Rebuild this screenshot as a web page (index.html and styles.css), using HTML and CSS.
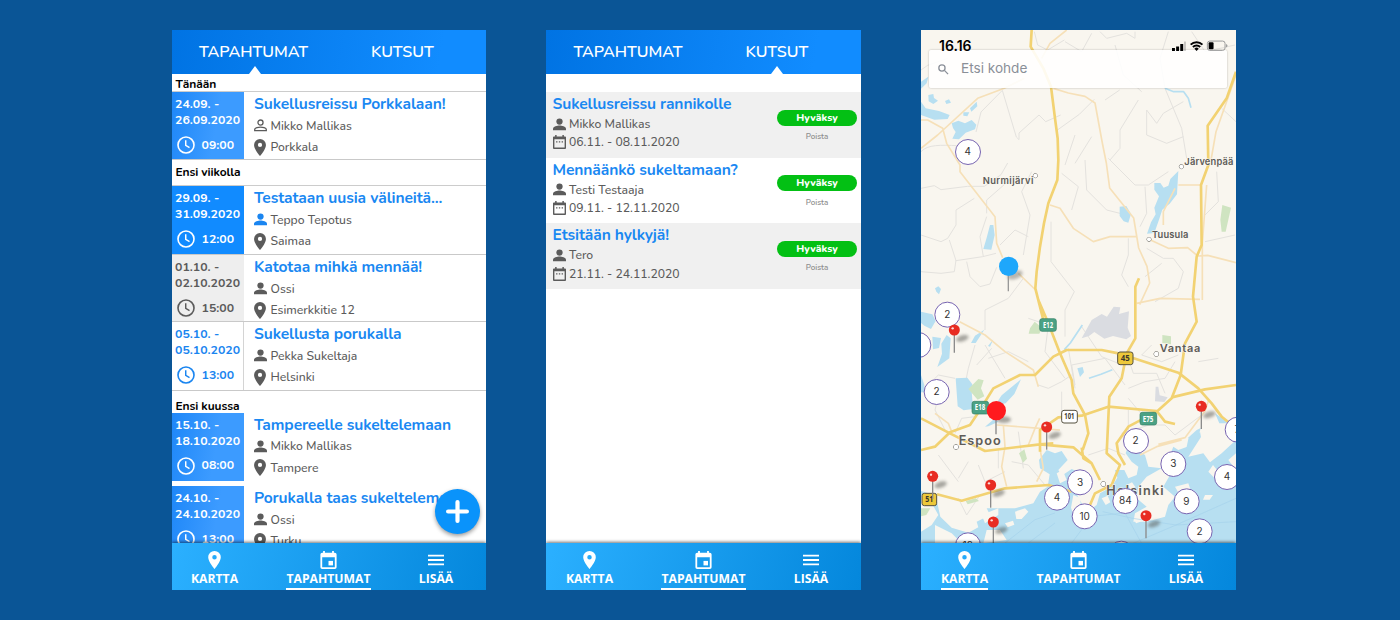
FILE: index.html
```html
<!DOCTYPE html>
<html lang="fi">
<head>
<meta charset="utf-8">
<title>Tapahtumat</title>
<link rel="stylesheet" href="styles.css">
</head>
<body>
<svg class="defs" width="0" height="0">
  <defs>
    <symbol id="i-person" viewBox="0 0 24 24"><circle cx="12" cy="6.500" r="5.800"/><path d="M0 22.500v-2.700C0 15.800 8 14 12 14s12 1.800 12 5.800v2.700z"/></symbol>
    <symbol id="i-person-o" viewBox="0 0 24 24"><circle cx="12" cy="6.500" r="4.700" fill="none" stroke="currentColor" stroke-width="2.400"/><path d="M1.300 21.500v-2c0-3 7.200-4.600 10.700-4.600s10.700 1.600 10.700 4.600v2z" fill="none" stroke="currentColor" stroke-width="2.400"/></symbol>
    <symbol id="i-pin" viewBox="0 0 14 20"><path fill-rule="evenodd" d="M7 0a7 7 0 0 0-7 7c0 5.250 7 13 7 13s7-7.750 7-13a7 7 0 0 0-7-7zm0 9.500a2.500 2.500 0 1 1 0-5 2.500 2.500 0 0 1 0 5z"/></symbol>
    <symbol id="i-clock" viewBox="0 0 20 20"><circle cx="10" cy="10" r="8.900" fill="none" stroke="currentColor" stroke-width="1.800"/><path d="M9.700 4.800v5.600l4.200 2.500" fill="none" stroke="currentColor" stroke-width="1.600"/></symbol>
    <symbol id="i-cal" viewBox="0 0 14 15"><path fill-rule="evenodd" d="M2.300 0h1.600v1.500h6.200V0h1.600v1.500H13a1 1 0 0 1 1 1V14a1 1 0 0 1-1 1H1a1 1 0 0 1-1-1V2.500a1 1 0 0 1 1-1h1.300zM1.500 4.500v9h11v-9z"/><path d="M3.300 6.700h1.500v1.400H3.300zm3 0h1.500v1.400H6.300zm3 0h1.500v1.400H9.300z"/></symbol>
    <symbol id="i-event" viewBox="0 0 18 20"><path fill-rule="evenodd" d="M3 0h2v2h8V0h2v2h1a2 2 0 0 1 2 2v14a2 2 0 0 1-2 2H2a2 2 0 0 1-2-2V4a2 2 0 0 1 2-2h1zM2 7v11h14V7z"/><path d="M9 11h5v5H9z"/></symbol>
    <symbol id="i-menu" viewBox="0 0 18 12"><path d="M0 0h18v2H0zm0 5h18v2H0zm0 5h18v2H0z"/></symbol>
    <symbol id="redpin" viewBox="-10 -10 60 90" overflow="visible"><ellipse cx="24" cy="25" rx="19" ry="9" transform="rotate(-18 24 25)" fill="#55544f" opacity=".5" filter="url(#soft)"/><path d="M0 10v58" stroke="#8b8b8b" stroke-width="4"/><circle r="16.500" fill="#e82c22"/><circle cx="-5" cy="-5" r="3.500" fill="#fff" opacity=".85"/></symbol>
    <filter id="soft" x="-50%" y="-100%" width="200%" height="300%"><feGaussianBlur stdDeviation="5"/></filter>
  </defs>
</svg>
<main class="stage">

<section class="phone events">
  <header class="tabs"><span class="tab tab-a active">TAPAHTUMAT</span><span class="tab tab-b">KUTSUT</span></header>
  <div class="list">
    <h2 class="group g1">Tänään</h2>
    <article class="row light lined">
      <div class="date"><p>24.09. -</p><p>26.09.2020</p><div class="time"><svg><use href="#i-clock"/></svg><span>09:00</span></div></div>
      <div class="info"><h3>Sukellusreissu Porkkalaan!</h3><p><svg class="person"><use href="#i-person-o"/></svg>Mikko Mallikas</p><p><svg class="pin"><use href="#i-pin"/></svg>Porkkala</p></div>
    </article>
    <h2 class="group g2">Ensi viikolla</h2>
    <article class="row solid lined tall">
      <div class="date"><p>29.09. -</p><p>31.09.2020</p><div class="time"><svg><use href="#i-clock"/></svg><span>12:00</span></div></div>
      <div class="info"><h3>Testataan uusia välineitä...</h3><p><svg class="person blue"><use href="#i-person"/></svg>Teppo Tepotus</p><p><svg class="pin"><use href="#i-pin"/></svg>Saimaa</p></div>
    </article>
    <article class="row grey lined short">
      <div class="date"><p>01.10. -</p><p>02.10.2020</p><div class="time"><svg><use href="#i-clock"/></svg><span>15:00</span></div></div>
      <div class="info"><h3>Katotaa mihkä mennää!</h3><p><svg class="person"><use href="#i-person"/></svg>Ossi</p><p><svg class="pin"><use href="#i-pin"/></svg>Esimerkkitie 12</p></div>
    </article>
    <article class="row plain lined">
      <div class="date"><p>05.10. -</p><p>05.10.2020</p><div class="time"><svg><use href="#i-clock"/></svg><span>13:00</span></div></div>
      <div class="info"><h3>Sukellusta porukalla</h3><p><svg class="person"><use href="#i-person"/></svg>Pekka Sukeltaja</p><p><svg class="pin"><use href="#i-pin"/></svg>Helsinki</p></div>
    </article>
    <h2 class="group g3">Ensi kuussa</h2>
    <article class="row light">
      <div class="date"><p>15.10. -</p><p>18.10.2020</p><div class="time"><svg><use href="#i-clock"/></svg><span>08:00</span></div></div>
      <div class="info"><h3>Tampereelle sukeltelemaan</h3><p><svg class="person"><use href="#i-person"/></svg>Mikko Mallikas</p><p><svg class="pin"><use href="#i-pin"/></svg>Tampere</p></div>
    </article>
    <article class="row light spaced">
      <div class="date"><p>24.10. -</p><p>24.10.2020</p><div class="time"><svg><use href="#i-clock"/></svg><span>13:00</span></div></div>
      <div class="info"><h3>Porukalla taas sukeltelemaan</h3><p><svg class="person"><use href="#i-person"/></svg>Ossi</p><p><svg class="pin"><use href="#i-pin"/></svg>Turku</p></div>
    </article>
  </div>
  <button class="fab" aria-label="Lisää"><svg viewBox="0 0 22 22"><path d="M11 2v18M2 11h18" stroke="#fff" stroke-width="4" stroke-linecap="round"/></svg></button>
  <nav class="nav"><a><svg class="n-pin"><use href="#i-pin"/></svg><span>KARTTA</span></a><a class="on"><svg class="n-ev"><use href="#i-event"/></svg><span>TAPAHTUMAT</span></a><a><svg class="n-menu"><use href="#i-menu"/></svg><span>LISÄÄ</span></a></nav>
</section>

<section class="phone invites">
  <header class="tabs"><span class="tab tab-a">TAPAHTUMAT</span><span class="tab tab-b active">KUTSUT</span></header>
  <div class="list inv-list">
    <article class="invite"><div class="inv-info"><h3>Sukellusreissu rannikolle</h3><p><svg class="person"><use href="#i-person"/></svg>Mikko Mallikas</p><p><svg class="cal"><use href="#i-cal"/></svg>06.11. - 08.11.2020</p></div><div class="actions"><button>Hyväksy</button><span>Poista</span></div></article>
    <article class="invite"><div class="inv-info"><h3>Mennäänkö sukeltamaan?</h3><p><svg class="person"><use href="#i-person"/></svg>Testi Testaaja</p><p><svg class="cal"><use href="#i-cal"/></svg>09.11. - 12.11.2020</p></div><div class="actions"><button>Hyväksy</button><span>Poista</span></div></article>
    <article class="invite"><div class="inv-info"><h3>Etsitään hylkyjä!</h3><p><svg class="person"><use href="#i-person"/></svg>Tero</p><p><svg class="cal"><use href="#i-cal"/></svg>21.11. - 24.11.2020</p></div><div class="actions"><button>Hyväksy</button><span>Poista</span></div></article>
  </div>
  <nav class="nav"><a><svg class="n-pin"><use href="#i-pin"/></svg><span>KARTTA</span></a><a class="on"><svg class="n-ev"><use href="#i-event"/></svg><span>TAPAHTUMAT</span></a><a><svg class="n-menu"><use href="#i-menu"/></svg><span>LISÄÄ</span></a></nav>
</section>

<section class="phone mapview">
  <svg class="map" viewBox="18 15 945 1539" preserveAspectRatio="none">
    <rect x="18" y="15" width="945" height="1680" fill="#f9f6ef"/>
    <g class="water">
      <path d="M18 170l22-15-5 20-17 16zM40 210l15-3 2 12 12 8-14 10-14-8zM90 228l12-5 6 10-14 4zM18 230l14 20 40 8 32 12-6 12-40 2-40-14zM110 295l20-8 20 8 20-10 14 14-4 14-28 10-20 20-20-2 10-20-8-12zM145 262l18 0-6 12-12-2zM165 250l20-20 2 14-18 16z"/>
    </g>
    <g class="minor">
      <path d="M18 135l20-14 60-21M18 380c20-22 60-20 110-18M262 196l-64 65-15 60M262 196l42 140 8 8 0-20 60-54 20 20 45-20M423 318l70-50 45-45M358 20l10 40 30 15 50-30M450 50l50 30 30-55M555 20l20 20 60-15 25 15 0-20M600 60l25 90 55 50M760 20l-25 80 15 90M830 20l40 60 90-20M614 195l-44 30M670 225l-55 90 0 55-30 35M695 255l30 40 20-30 60-35M695 255l0 75 60 25 50-20M750 190l50 120 15 90M920 250l43 40M480 330l-30 90M530 335l-50 80"/>
      <path d="M18 490l40-8 20 12 80-10 50 0 50-35 20-35M18 630l60 20 20-10 25-40v-45l55-35M103 645l20 62 80-12 40-10M18 740l60 5 40-5 5-35M215 565v-40l80-70M350 440l-30 60 25 70-20 120M155 710l10 45 30 30 30-8 20-50M205 695l-10-60 20-60M255 660l45-45 40 20M325 760l-45 60-70 35v60M408 590l0 120 70 90-28 55v80M440 445l50 40-20 70M510 405l5 90 60 60 40 10M580 400l80 80 40 0 60-40M690 485l5 80-20 40M640 640l0 50-20 60 20 35M695 670l50 30 30 0 30 40-15 50-70 40M740 715l-50 40M905 440l5 90-40 40M870 650l90-20"/>
      <path d="M340 880l60 20-10 80 60 80M500 905l60 90 50 20M180 960l-20 70-6 30M210 960l60 100M220 1000l60-20 60 30M230 970l-45 50M480 1080l-10-60 100-20 60 80M460 970l20 120M640 1000l15 45 70 0 25 60M640 1090l50-20 60-10 30-50M710 960l-30 30 60 20 50-20M640 1120l50 60M370 1080l30 10 40-20 30-20M20 1100l50-50 50 10M90 1215l-30-60 20-80M120 1225l20-45 40-5M850 1010l60-10M690 1200l60 0 30 30 80-60M640 1155v70M720 1195l-100 30M440 1100v80M190 1320l20 50 60-30M70 1290l60 80M160 1310l-30 50M290 1310l50 10 50 60M250 1270v60M130 1420l25 50 40-60M310 1220l15 110M520 1290l60-20 50 20"/>
    </g>
    <g class="water">
      <path d="M790 438l-4 70-22 28-22 18-10 30-14 40-22 2 12-34 14-24-4-20 14-34 -14-20 0-20 18 0 10 14 14-6 6-20zM614 545l20-2 14 24-8 26-14-4-12-16zM225 600l10 0 4 30-10 44-24-2 10-34zM60 790l10-6 8 8-6 16-8-8z"/>
      <path d="M18 860l34 8 10 20-14 24-20-10-10-8zM95 930l12 10-4 60-36 26 14-40-2-30zM208 914l-26 40-14 0 12-22zM52 935l26 4-6 30-18 4zM235 943l-16 20 6 2zM122 1060l35-2 15 20-2 20 4 54-28 4-18-12zM318 1063l-20 44-26 28-32 6 20-30zM487 1030l16-4 4 16-12 14zM210 1205l30-25 10 10-30 14z"/>
      <path d="M18 1050l10 30 2 22-12 0zM900 1165l30 20 33 0 0 10-50 0z"/>
    </g>
    <path d="M750 190l26 10 30 0 14 20 8 28M502 900l-36 54-18 20M522 1060l36-12 34-14" class="stream"/>
    <g class="green"><path d="M922 540l26 8-16 72-12 0-4-36zM345 910l14-20 22 18-8 18-32 0zM742 930l26 4 0 24-26-4zM160 1092l30-30 16 4-8 24 10 24-20 10zM312 1285l16-12 8 28-12 12z"/></g>
    <path class="urban" d="M500 940l30-55 30-18 16 8 20-30 20 2-4 20 30-8 -4 50 10 24-14 10-40-10-26 8-30-20-16 12zM722 1085l8 0 4 26 24 6-10 14-28-2z"/>
    <!-- sea and coast -->
    <path class="sea" d="M18 1398L52 1408 66 1430 76 1475 110 1508 160 1523 190 1507 185 1490 225 1470 215 1450 300 1450 355 1435 375 1400 398 1385 404 1348 375 1330 372 1305 395 1275 420 1285 440 1278 458 1305 430 1335 440 1352 470 1332 500 1345 478 1395 500 1435 525 1455 545 1440 555 1405 590 1385 607 1358 600 1335 628 1335 640 1360 665 1350 670 1325 650 1310 632 1285 640 1260 690 1290 700 1325 740 1330 765 1290 775 1265 790 1275 825 1262 855 1220 858 1236 820 1295 865 1285 885 1312 920 1285 963 1245V1700H18z"/>
    <path class="water" d="M813 1275l8-38 24-22 12-6-10 40-18 24z"/>
    <g class="land"><path d="M18 1410l30 20 22 40-20 30-32 20zM670 1385l25-30 45-25 25 20-20 35 35 30-20 25-10 35-55 15-40 0 5-25 35-20-30-25zM780 1385l40-10 10 30-30 15zM475 1410l20 8 5 45-20 20-12-35zM425 1345l18-10 12 30-20 10zM560 1420l18-8 8 20-14 8zM870 1410l24 0-10 14-20 0zM880 1340l14-20 20 25-10 20zM940 1305l23-20v50zM282 1422l20-8 4 14-16 6zM300 1460l30-10 10 10-20 22-16 0zM270 1495l24-8 4 12-20 8zM215 1515l40 0 20 30-70 10zM60 1500l50 25 30 30H60zM200 1470l50-20 0 20-40 25zM635 1380l16-8 10 14-14 6zM655 1480l20-5 6 14-18 6z"/></g>
    <g class="green"><path d="M152 1428l30-8 10 8-34 10zM18 1450l28 0-12 20-16 4z"/></g>
    <path class="ferry" d="M963 1420l-180 80-130-20-90-20M270 1554l90-70 60-20M470 1554l60-80 100-10 60 110M963 1490l-180 10-150 64M340 1554l80-60"/>
    <g class="road pale">
      <path d="M18 370l50-40 120-110 80-30 60-30M415 190l45 14 50 10 30 20 22 120 12 60 10 75 72 90 15 90 25 55 8 50-30 65M380 100l25-45 50-40M18 285h20l45 25 12 45 40 65 0 20 105 135 5 80 18 43M310 745l52 50M405 540l30 10 40 60 60 40 50-15 80 0M700 642l60 28 58-2 30 25 30-2 85 22M665 835l70-15 120 3M790 480h68M963 150l-60 170-15 85M745 600l0-40 35-70M875 480l-13 175v170M134 890l76 40 60 50 85 55 15 50M60 1165l40 30 10 25M245 1200l130 10 60 5M265 1200l5 65-10 60 15 60M340 1260l20-50 14-30M730 1258l80-20 60-80 10-30M675 1290l50-25 75-20M375 1270l10 60-20 40"/>
    </g>
    <g class="road main">
      <path d="M350 15L347 65 385 130 408 185 420 280 428 340 430 405 427 465 400 535 387 595 375 665 365 740 361 790 385 885 400 895 435 985 470 1065 475 1105 510 1170 520 1225 503 1275M400 895L370 825"/>
      <path d="M963 140L935 220 878 302 880 420 858 480 860 660 845 695 834 815 845 890 810 955 797 1050 770 1120 725 1160 640 1205 605 1255 610 1285 630 1320"/>
      <path d="M672 760L661 785V940L635 985 620 1060 583 1115 575 1285 615 1320 600 1355 590 1380 540 1405 525 1440"/>
      <path d="M18 1275L60 1265 105 1222 165 1200 195 1155 235 1090 315 1050H360L415 995 455 975 560 975 610 985 790 1043 850 1090 890 1135 920 1175 963 1210"/>
      <path d="M18 1180L105 1225 210 1278 375 1258 475 1267 530 1315 555 1365M375 1280V1215L430 1177 500 1172 580 1145 725 1158 750 1190 780 1197M770 1117L870 1093 963 1080M500 1268L505 1300 530 1315M375 1258L415 1255"/>
      <path d="M66 1408L140 1427 270 1390 400 1380 470 1400"/>
    </g>
    <g class="city"><g class="dots"><circle cx="361" cy="452" r="6"/><circle cx="799" cy="425" r="6"/><circle cx="702" cy="643" r="6"/><circle cx="724" cy="987" r="7"/><circle cx="123" cy="1266" r="7"/><circle cx="565" cy="1377" r="7"/></g>
      <text x="203" y="477" textLength="152">Nurmijärvi</text><text x="808" y="419" textLength="147">Järvenpää</text><text x="711" y="638" textLength="109">Tuusula</text>
      <g class="big"><text x="734" y="980" textLength="122">Vantaa</text><text x="131" y="1259" textLength="126" class="huge">Espoo</text><text x="574" y="1411" textLength="172" class="huge">Helsinki</text></g>
    </g>
    <g class="shield">
      <g fill="#4ba184" stroke="#2f7d62" stroke-width="2"><rect x="374" y="881" width="50" height="38" rx="7"/><rect x="171" y="1129" width="50" height="38" rx="7"/><rect x="675" y="1162" width="50" height="38" rx="7"/></g>
      <g class="e"><text x="399" y="908" textLength="30" lengthAdjust="spacingAndGlyphs">E12</text><text x="195" y="1156" textLength="31" lengthAdjust="spacingAndGlyphs">E18</text><text x="699" y="1190" textLength="32" lengthAdjust="spacingAndGlyphs">E75</text></g>
      <g stroke="#55503f" stroke-width="3"><rect x="608" y="981" width="46" height="38" rx="7" fill="#edc83a"/><rect x="440" y="1156" width="47" height="38" rx="7" fill="#fff"/><rect x="21" y="1405" width="44" height="37" rx="7" fill="#edc83a"/></g>
      <text x="631" y="1008" textLength="27" lengthAdjust="spacingAndGlyphs">45</text><text x="463" y="1183" textLength="30" lengthAdjust="spacingAndGlyphs">101</text><text x="43" y="1432" textLength="24" lengthAdjust="spacingAndGlyphs">51</text>
    </g>
    <g class="cluster">
      <circle cx="159" cy="381" r="37.500"/><circle cx="97" cy="869" r="37.500"/><circle cx="10" cy="960" r="37.500"/><circle cx="65" cy="1101" r="37.500"/><circle cx="968" cy="1214" r="37.500"/><circle cx="663" cy="1248" r="37.500"/><circle cx="775" cy="1317" r="37.500"/><circle cx="936" cy="1356" r="37.500"/><circle cx="495" cy="1372" r="37.500"/><circle cx="426" cy="1418" r="37.500"/><circle cx="509" cy="1474" r="37.500"/><circle cx="631" cy="1428" r="37.500"/><circle cx="815" cy="1429" r="37.500"/><circle cx="854" cy="1519" r="37.500"/><circle cx="159" cy="1561" r="37.500"/><circle cx="619" cy="1586" r="37.500"/>
      <text x="158" y="391">4</text><text x="97" y="879">2</text><text x="65" y="1111">2</text><text x="967" y="1224">7</text><text x="662" y="1258">2</text><text x="775" y="1327">3</text><text x="936" y="1366">4</text><text x="495" y="1382">3</text><text x="426" y="1428">4</text><text x="509" y="1484">10</text><text x="631" y="1438">84</text><text x="814" y="1439">9</text><text x="854" y="1529">2</text><text x="158" y="1571">12</text>
    </g>
    <g>
      <use href="#redpin" x="108" y="905" width="60" height="90"/><use href="#redpin" x="385" y="1196" width="60" height="90"/><use href="#redpin" x="849" y="1134" width="60" height="90"/><use href="#redpin" x="43" y="1344" width="60" height="90"/><use href="#redpin" x="217" y="1370" width="60" height="90"/><use href="#redpin" x="225" y="1481" width="60" height="90"/><use href="#redpin" x="683" y="1462" width="60" height="90"/>
      <ellipse cx="300" cy="750" rx="24" ry="12" fill="#55544f" opacity=".4" filter="url(#soft)" transform="rotate(-20 300 750)"/><path d="M280 745v54" stroke="#999" stroke-width="4"/><circle cx="281" cy="724" r="29" fill="#1ea7fb"/>
      <ellipse cx="266" cy="1184" rx="22" ry="10" fill="#55544f" opacity=".5" filter="url(#soft)"/><path d="M243 1170v58" stroke="#888" stroke-width="4"/><circle cx="244" cy="1157" r="29" fill="#ff1a1e"/>
    </g>
  </svg>
  <div class="status"><span>16.16</span><svg viewBox="0 0 57 12"><path d="M0 9h3v3H0zM4.200 7.500h3V12h-3zM8.400 5h3v7h-3z"/><path d="M12.200 2.500h2V12h-2z" opacity=".2"/><g fill="none" stroke="#000" stroke-width="2"><path d="M19 5.600a8.500 8.500 0 0 1 12 0M21.300 8a5.200 5.200 0 0 1 7.400 0"/></g><path d="M25 12l-2.200-2.300a3.200 3.200 0 0 1 4.400 0z"/><rect x="36" y="2" width="18" height="9.500" rx="2.500" fill="none" stroke="#999"/><rect x="37.300" y="3.300" width="5" height="7" rx="1"/><path d="M55 5v3.500q1.500-.5 1.500-1.750T55 5z" fill="#999"/></svg></div>
  <div class="search"><svg viewBox="0 0 12 12"><circle cx="4.300" cy="4.300" r="3.400"/><path d="M7 7l4 4"/></svg><span>Etsi kohde</span></div>
  <nav class="nav"><a class="on"><svg class="n-pin"><use href="#i-pin"/></svg><span>KARTTA</span></a><a><svg class="n-ev"><use href="#i-event"/></svg><span>TAPAHTUMAT</span></a><a><svg class="n-menu"><use href="#i-menu"/></svg><span>LISÄÄ</span></a></nav>
</section>
</main>
</body>
</html>
```
FILE: styles.css
```css
* { box-sizing: border-box; margin: 0; padding: 0; }
body { width: 1400px; height: 620px; overflow: hidden; background: #0a5596; font-family: Nunito, "Open Sans", sans-serif; }
.defs { position: absolute; }
.stage { display: flex; gap: 60px; padding: 30px 0 0 172px; }
.phone { position: relative; display: flex; flex-direction: column; width: 315px; height: 560px; overflow: hidden; background: #fff; }
.phone.events { width: 314px; }
svg { fill: currentColor; display: block; flex: none; }

.tabs { display: flex; flex: none; height: 44px; padding-left: 27px; gap: 61px; background: linear-gradient(100deg, #0073e3, #118cff 85%); color: #fff; font-size: 16px; font-weight: 600; line-height: 45px; }
.invites .tabs { padding-left: 27.500px; }
.tab { position: relative; height: 44px; white-space: nowrap; }
.tab-a { width: 111px; }
.tab-b { width: 63px; }
.tab.active::after { content: ""; position: absolute; bottom: 0; left: 50%; margin-left: -6px; border: 6px solid transparent; border-top: 0; border-bottom: 8px solid #fff; }

.list { flex: 1; min-height: 0; overflow: hidden; }
.group { padding-left: 3.500px; color: #000; font-size: 12px; font-weight: 700; letter-spacing: -.1px; }
.g1 { height: 18px; line-height: 20px; border-bottom: 1px solid #ccc; }
.g2 { height: 26px; line-height: 24px; border-bottom: 1px solid #ccc; }
.g3 { height: 22px; line-height: 17px; padding-top: 7px; }
.row { display: flex; height: 68px; color: #5b5b5b; }
.row.lined { height: 68px; border-bottom: 1px solid #c9c9c9; }
.row.tall { height: 69px; }
.row.short { height: 67px; }
.row.plain { height: 68.500px; }
.row.spaced { margin-top: 5.500px; }
.date { width: 72px; padding: 4px 0 0 3px; font-size: 12.300px; font-weight: 700; line-height: 16.300px; white-space: nowrap; }
.light .date { background: linear-gradient(100deg, #1e87f8, #3c9bff 60%); color: #fff; }
.solid .date { background: #118bff; color: #fff; }
.grey .date { background: #eee; }
.plain .date { color: #1a85f0; border-right: 1px solid #d4d4d4; }
.time { display: flex; align-items: center; gap: 7px; margin-top: 7.500px; padding-left: 1.500px; }
.time svg { width: 18px; height: 18px; }
.info { padding: 1px 0 0 10px; flex: 1; min-width: 0; white-space: nowrap; }
h3 { color: #1a88f2; font-size: 15.600px; font-weight: 700; line-height: 22px; letter-spacing: -.1px; }
.info p, .inv-info p { display: flex; align-items: center; font-size: 12.200px; font-weight: 500; gap: 4px; }
.info p { height: 21.500px; }
.info p { gap: 3.500px; }
.person { width: 13px; height: 13px; }
.person.blue { color: #1a85f0; }
.pin { width: 12px; height: 17px; }
.info .pin { margin-right: 1px; }

.inv-list { padding-top: 18px; }
.invite { display: flex; justify-content: space-between; height: 65.700px; padding: 1px 4px 0 6.500px; color: #5b5b5b; }
.invite:nth-child(odd) { background: #f0f0f0; }
.inv-info p { height: 18.200px; gap: 3.500px; }
.cal { width: 13px; height: 14px; }
.actions { width: 80px; padding-top: 16.500px; text-align: center; }
.actions button { display: block; width: 80px; height: 16px; border: 0; border-radius: 8px; background: #03c014; color: #fff; font: 800 10.300px/16px Nunito, "Open Sans", sans-serif; }
.actions span { display: block; margin-top: 5.500px; color: #8e8e8e; font-size: 8px; font-weight: 600; line-height: 12px; }

.fab { position: absolute; right: 6px; top: 459px; width: 45px; height: 45px; border: 0; border-radius: 50%; background: #0a93fb; box-shadow: 0 2px 4px rgba(0,0,0,.4); display: grid; place-items: center; }
.fab svg { width: 23px; height: 23px; }

.nav { position: relative; flex: none; display: flex; height: 47px; padding: 8px 0 0 19px; gap: 48px; background: linear-gradient(105deg, #2bb0ff, #0487dc); box-shadow: 0 -1px 3px rgba(0,0,0,.55); color: #fff; font-family: "Open Sans", sans-serif; font-size: 12.200px; font-weight: 700; }
.invites .nav, .mapview .nav { padding-left: 20px; }
.nav a { display: flex; flex-direction: column; align-items: center; width: 47px; height: 39px; border-bottom: 2px solid transparent; }
.nav a:nth-child(2) { width: 85px; }
.nav a:nth-child(3) { width: 34px; }
.nav a.on { border-color: #fff; }
.nav svg { height: 18px; }
.nav span { line-height: 19px; white-space: nowrap; }
.n-pin { width: 13px; }
.n-ev { width: 17px; }
.n-menu { width: 16px; }

.map { position: absolute; inset: 0 0 auto; width: 315px; height: 513px; font-family: Inter, sans-serif; }
.water, .sea { fill: #b7dff1; }
.land { fill: #f9f6ef; }
.green { fill: #cfe4c1; }
.urban { fill: #dadce1; }
.minor, .ferry, .stream { fill: none; stroke: #e4e2de; stroke-width: 3; stroke-linejoin: round; }
.stream { stroke: #b7dff1; stroke-width: 5; }
.ferry { stroke: #a5d2ec; stroke-width: 2; }
.road { fill: none; stroke-linejoin: round; }
.pale { stroke: #f6e0b8; stroke-width: 5; }
.main { stroke: #f2d272; stroke-width: 8; }
.city { fill: #5d5b57; font-size: 28px; font-weight: 600; paint-order: stroke; stroke: #f9f6ef; stroke-width: 3; }
.dots { fill: #fff; stroke: #66645f; }
.big { font-size: 33px; font-weight: 600; }
.huge { font-size: 38px; }
.shield { font: 700 24px "Open Sans", sans-serif; text-anchor: middle; fill: #3b382c; }
.shield text { stroke: none; }
.shield .e { fill: #fff; }
.cluster { font-size: 30px; fill: #333; text-anchor: middle; }
.cluster circle { fill: #fff; stroke: #7764b1; stroke-width: 3; }
.status { position: relative; z-index: 1; flex: none; display: flex; justify-content: space-between; height: 20px; padding: 9px 8px 0 18px; color: #000; font: 600 14px/14px Inter, sans-serif; }
.status svg { width: 56px; height: 12px; }
.search { position: relative; display: flex; align-items: center; flex: none; width: 298px; height: 38px; margin: 0 0 auto 8px; padding-left: 9px; gap: 12px; border-radius: 2px; background: rgba(255,255,255,.88); box-shadow: 0 0 2px rgba(0,0,0,.3); color: #8a8f98; font: 13.600px/36px Inter, sans-serif; }
.search svg { width: 11px; height: 11px; fill: none; stroke: currentColor; stroke-width: 1.400; }
.search span { height: 38px; }
```
